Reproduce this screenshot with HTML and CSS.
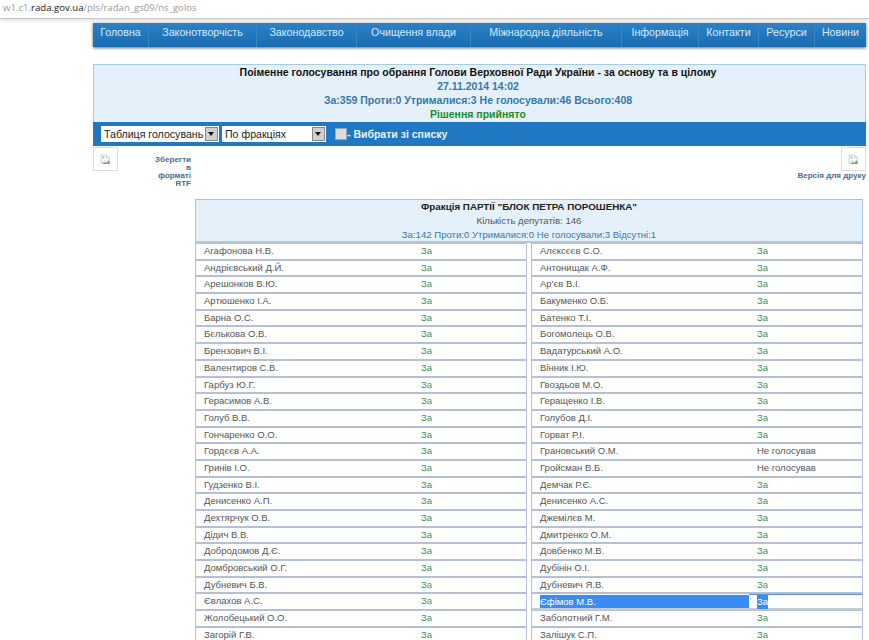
FILE: index.html
```html
<!DOCTYPE html>
<html lang="uk">
<head>
    <meta charset="UTF-8">
    <meta name="viewport" content="width=device-width, initial-scale=1.0">
    <title>Поіменне голосування</title>
    <link rel="stylesheet" href="styles.css">
</head>
<body>
    <div class="address-bar">w1.c1.<b>rada.gov.ua</b>/pls/radan_gs09/ns_golos</div>

    <div class="page">
        <ul class="nav">
            <li class="nav-home">Головна</li>
            <li class="nav-law">Законотворчість</li>
            <li class="nav-code">Законодавство</li>
            <li class="nav-clean">Очищення влади</li>
            <li class="nav-intl">Міжнародна діяльність</li>
            <li class="nav-info">Інформація</li>
            <li class="nav-contacts">Контакти</li>
            <li class="nav-res">Ресурси</li>
            <li class="nav-news">Новини</li>
        </ul>

        <div class="summary">
            <div class="summary-title">Поіменне голосування про обрання Голови Верховної Ради України - за основу та в цілому</div>
            <div class="summary-line">27.11.2014 14:02</div>
            <div class="summary-line">За:359 Проти:0 Утрималися:3 Не голосували:46 Всього:408</div>
            <div class="summary-result">Рішення прийнято</div>
        </div>

        <div class="toolbar">
            <span class="select select-table">Таблиця голосувань<i class="select-btn"></i></span>
            <span class="select select-group">По фракціях<i class="select-btn"></i></span>
            <span class="check"></span>
            <span class="toolbar-label">- Вибрати зі списку</span>
        </div>

        <div class="tools">
            <div class="tool-rtf">
                <span class="img-box">
                    <svg class="broken" viewBox="0 0 16 16"><path d="M1.5 1.5h8l4 4v3l-4 3-3-2-5 4z" fill="#fff" stroke="#b4bcc8"/><path d="M9.5 1.5v4h4" fill="#e8ecf2" stroke="#b4bcc8"/><path d="M3 14.5l4-3 2 1.500 5-4v5.500z" fill="#6fa35a"/><circle cx="5" cy="5" r="1.6" fill="#8db4e8"/></svg>
                </span>
                <a class="tool-link tool-link-rtf">Зберегти в форматі RTF</a>
            </div>
            <div class="tool-print">
                <span class="img-box">
                    <svg class="broken" viewBox="0 0 16 16"><path d="M1.5 1.5h8l4 4v3l-4 3-3-2-5 4z" fill="#fff" stroke="#b4bcc8"/><path d="M9.5 1.5v4h4" fill="#e8ecf2" stroke="#b4bcc8"/><path d="M3 14.5l4-3 2 1.500 5-4v5.500z" fill="#6fa35a"/><circle cx="5" cy="5" r="1.6" fill="#8db4e8"/></svg>
                </span>
                <a class="tool-link">Версія для друку</a>
            </div>
        </div>

        <div class="fraction">
            <div class="fraction-head">
                <div class="fraction-name">Фракція ПАРТІЇ "БЛОК ПЕТРА ПОРОШЕНКА"</div>
                <div class="fraction-count">Кількість депутатів: 146</div>
                <div class="fraction-votes">За:142 Проти:0 Утрималися:0 Не голосували:3 Відсутні:1</div>
            </div>
            <div class="deputies">
                <div class="dep"><span class="dep-name">Агафонова Н.В.</span><span class="vote">За</span></div>
                <div class="dep"><span class="dep-name">Алєксєєв С.О.</span><span class="vote">За</span></div>
                <div class="dep"><span class="dep-name">Андрієвський Д.Й.</span><span class="vote">За</span></div>
                <div class="dep"><span class="dep-name">Антонищак А.Ф.</span><span class="vote">За</span></div>
                <div class="dep"><span class="dep-name">Арешонков В.Ю.</span><span class="vote">За</span></div>
                <div class="dep"><span class="dep-name">Ар'єв В.І.</span><span class="vote">За</span></div>
                <div class="dep"><span class="dep-name">Артюшенко І.А.</span><span class="vote">За</span></div>
                <div class="dep"><span class="dep-name">Бакуменко О.Б.</span><span class="vote">За</span></div>
                <div class="dep"><span class="dep-name">Барна О.С.</span><span class="vote">За</span></div>
                <div class="dep"><span class="dep-name">Батенко Т.І.</span><span class="vote">За</span></div>
                <div class="dep"><span class="dep-name">Бєлькова О.В.</span><span class="vote">За</span></div>
                <div class="dep"><span class="dep-name">Богомолець О.В.</span><span class="vote">За</span></div>
                <div class="dep"><span class="dep-name">Брензович В.І.</span><span class="vote">За</span></div>
                <div class="dep"><span class="dep-name">Вадатурський А.О.</span><span class="vote">За</span></div>
                <div class="dep"><span class="dep-name">Валентиров С.В.</span><span class="vote">За</span></div>
                <div class="dep"><span class="dep-name">Вінник І.Ю.</span><span class="vote">За</span></div>
                <div class="dep"><span class="dep-name">Гарбуз Ю.Г.</span><span class="vote">За</span></div>
                <div class="dep"><span class="dep-name">Гвоздьов М.О.</span><span class="vote">За</span></div>
                <div class="dep"><span class="dep-name">Герасимов А.В.</span><span class="vote">За</span></div>
                <div class="dep"><span class="dep-name">Геращенко І.В.</span><span class="vote">За</span></div>
                <div class="dep"><span class="dep-name">Голуб В.В.</span><span class="vote">За</span></div>
                <div class="dep"><span class="dep-name">Голубов Д.І.</span><span class="vote">За</span></div>
                <div class="dep"><span class="dep-name">Гончаренко О.О.</span><span class="vote">За</span></div>
                <div class="dep"><span class="dep-name">Горват Р.І.</span><span class="vote">За</span></div>
                <div class="dep"><span class="dep-name">Гордєєв А.А.</span><span class="vote">За</span></div>
                <div class="dep"><span class="dep-name">Грановський О.М.</span><span class="vote vote-none">Не голосував</span></div>
                <div class="dep"><span class="dep-name">Гринів І.О.</span><span class="vote">За</span></div>
                <div class="dep"><span class="dep-name">Гройсман В.Б.</span><span class="vote vote-none">Не голосував</span></div>
                <div class="dep"><span class="dep-name">Гудзенко В.І.</span><span class="vote">За</span></div>
                <div class="dep"><span class="dep-name">Демчак Р.Є.</span><span class="vote">За</span></div>
                <div class="dep"><span class="dep-name">Денисенко А.П.</span><span class="vote">За</span></div>
                <div class="dep"><span class="dep-name">Денисенко А.С.</span><span class="vote">За</span></div>
                <div class="dep"><span class="dep-name">Дехтярчук О.В.</span><span class="vote">За</span></div>
                <div class="dep"><span class="dep-name">Джемілєв М.</span><span class="vote">За</span></div>
                <div class="dep"><span class="dep-name">Дідич В.В.</span><span class="vote">За</span></div>
                <div class="dep"><span class="dep-name">Дмитренко О.М.</span><span class="vote">За</span></div>
                <div class="dep"><span class="dep-name">Добродомов Д.Є.</span><span class="vote">За</span></div>
                <div class="dep"><span class="dep-name">Довбенко М.В.</span><span class="vote">За</span></div>
                <div class="dep"><span class="dep-name">Домбровський О.Г.</span><span class="vote">За</span></div>
                <div class="dep"><span class="dep-name">Дубінін О.І.</span><span class="vote">За</span></div>
                <div class="dep"><span class="dep-name">Дубневич Б.В.</span><span class="vote">За</span></div>
                <div class="dep"><span class="dep-name">Дубневич Я.В.</span><span class="vote">За</span></div>
                <div class="dep"><span class="dep-name">Євлахов А.С.</span><span class="vote">За</span></div>
                <div class="dep dep-selected"><span class="dep-name">Єфімов М.В.</span><span class="vote"><span class="sel-vote">За</span></span></div>
                <div class="dep"><span class="dep-name">Жолобецький О.О.</span><span class="vote">За</span></div>
                <div class="dep"><span class="dep-name">Заболотний Г.М.</span><span class="vote">За</span></div>
                <div class="dep"><span class="dep-name">Загорій Г.В.</span><span class="vote">За</span></div>
                <div class="dep"><span class="dep-name">Залішук С.П.</span><span class="vote">За</span></div>
            </div>
        </div>
    </div>
</body>
</html>
```

FILE: styles.css
```css
html, body {
    height: 640px;
    overflow: hidden;
}

body {
    margin: 0;
    background-color: #fff;
    font-family: "Liberation Sans", Arial, sans-serif;
    font-size: 10px;
}

.address-bar {
    box-sizing: border-box;
    height: 19px;
    padding-left: 3px;
    border-bottom: 1px solid #c9c9c9;
    box-shadow: 0 2px 3px #e2e2e2;
    font-family: "Open Sans", sans-serif;
    font-size: 9.6px;
    line-height: 16px;
    color: #9a9a9a;
}

.address-bar b {
    font-weight: normal;
    color: #222;
}

.page {
    margin: 4px 3px 0 93px;
}

/* top menu */
.nav {
    display: flex;
    height: 24px;
    margin: 0;
    padding: 0;
    list-style: none;
    background: linear-gradient(#2b82c8, #1a6cb0);
    box-shadow: 0 1px 3px #666;
}

.nav li {
    box-sizing: border-box;
    border-right: 1px solid #3c85bd;
    color: #d5e9f8;
    font-size: 10.7px;
    line-height: 19px;
    text-align: center;
}

.nav .nav-home { width: 56px; }
.nav .nav-law { width: 108px; }
.nav .nav-code { width: 100px; }
.nav .nav-clean { width: 114px; }
.nav .nav-intl { width: 151px; }
.nav .nav-info { width: 77px; }
.nav .nav-contacts { width: 60px; }
.nav .nav-res { width: 56px; }
.nav .nav-news { flex: 1; border-right: 0; }

/* vote summary */
.summary {
    height: 57px;
    margin-top: 17px;
    padding-right: 3px;
    border: 1px solid #a9cce3;
    border-bottom: 0;
    background-color: #e4f1fb;
    font-size: 10.5px;
    font-weight: bold;
    line-height: 14px;
    text-align: center;
    color: #3a77a8;
}

.summary-title {
    color: #111;
}

.summary-result {
    color: #1f8a1f;
}

.toolbar {
    display: flex;
    align-items: center;
    height: 24px;
    padding-left: 8px;
    background-color: #1f78c1;
}

.select {
    position: relative;
    box-sizing: border-box;
    height: 16px;
    margin-right: 3px;
    padding-left: 3px;
    background-color: #fff;
    font-size: 10.6px;
    line-height: 16px;
    color: #222;
}

.select-table { width: 118px; }
.select-group { width: 104px; }

.select-btn {
    position: absolute;
    top: 1px;
    right: 1px;
    width: 13px;
    height: 14px;
    background: #cfcfcf;
    border: 1px solid #8a8a8a;
    box-sizing: border-box;
}

.select-btn::after {
    content: "";
    position: absolute;
    top: 4px;
    left: 2px;
    border: 3.5px solid transparent;
    border-top: 4px solid #111;
    border-bottom: 0;
}

.check {
    width: 10px;
    height: 10px;
    margin: 0 0 0 6px;
    border: 1px solid #8fa9bf;
    background-color: #dcdcdc;
}

.toolbar-label {
    font-size: 10.5px;
    font-weight: bold;
    color: #e8f3fb;
}

/* image links under the toolbar */
.tools {
    display: flex;
    justify-content: space-between;
    height: 52px;
    padding-top: 1px;
}

.img-box {
    display: flex;
    align-items: center;
    justify-content: center;
    box-sizing: border-box;
    width: 25px;
    height: 24px;
    border: 1px solid #dcdcdc;
}

.broken {
    width: 11px;
    height: 11px;
}

.tool-rtf {
    display: flex;
    width: 98px;
}

.tool-print {
    display: flex;
    flex-direction: column;
    align-items: flex-end;
}

.tool-link {
    font-size: 8px;
    font-weight: bold;
    line-height: 8px;
    color: #4a6b94;
}

.tool-link-rtf {
    width: 73px;
    padding: 9px 0 0 33px;
    box-sizing: border-box;
    text-align: right;
}

.tool-print .tool-link {
    line-height: 8px;
    margin-top: 1px;
}

/* fraction table */
.fraction {
    margin: 0 3px 0 102px;
}

.fraction-head {
    box-sizing: border-box;
    height: 44px;
    border: 1px solid #a9c4d8;
    border-bottom: 2px solid #b6c6d8;
    background-color: #e4f1fb;
    font-size: 9.6px;
    line-height: 14px;
    text-align: center;
    color: #555;
}

.fraction-name {
    font-size: 9.8px;
    font-weight: bold;
    color: #222;
}

.fraction-votes {
    color: #3a77a8;
}

.deputies {
    display: grid;
    grid-template-columns: 332px 332px;
    grid-auto-rows: 16.7px;
    justify-content: space-between;
}

.dep {
    display: flex;
    box-sizing: border-box;
    border: 1px solid #b3c0d6;
    font-size: 9.5px;
    line-height: 14px;
    color: #555;
}

.dep-name {
    flex-shrink: 0;
    box-sizing: border-box;
    width: 225px;
    padding-left: 8px;
}

.vote {
    flex: 1;
    color: #3f9150;
}

.vote-none {
    color: #555;
}

/* the row that was selected with the mouse */
.dep-selected {
    border-bottom: 2px solid #c8ccd2;
}

.dep-selected .dep-name {
    width: 209px;
    margin: 1px 8px 0;
    padding-left: 0;
    background-color: #3a8cf5;
    color: #fff;
}

.dep-selected .vote {
    margin-left: -8px;
    padding-left: 8px;
    border-top: 1px solid #5b8fd0;
}

.sel-vote {
    display: inline-block;
    background-color: #3a8cf5;
    color: #fff;
}
```
